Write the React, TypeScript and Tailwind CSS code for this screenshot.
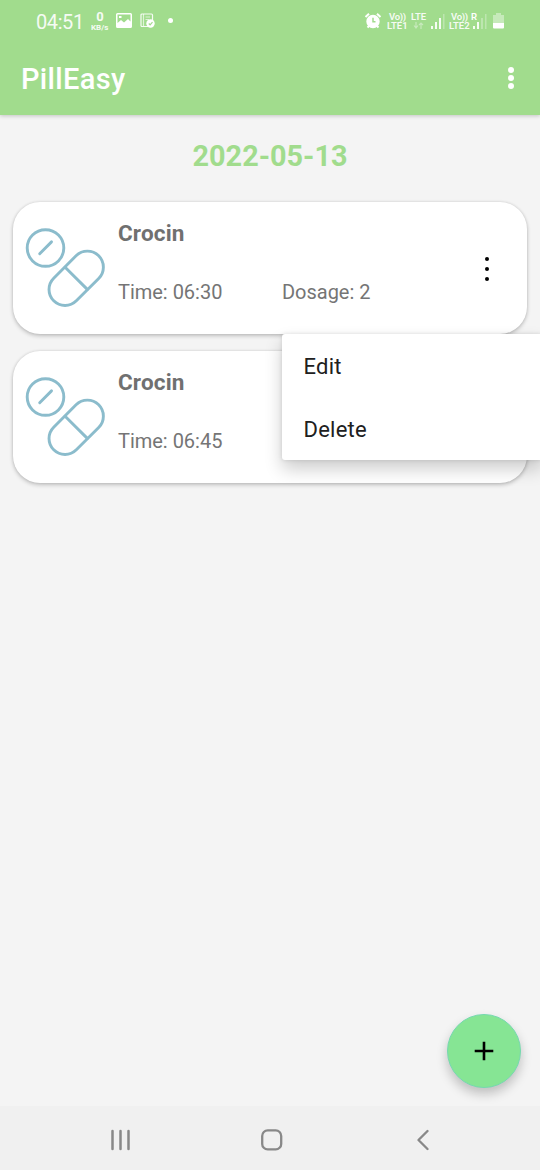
import React from "react";

function PillIcon() {
  return (
    <svg className="block h-[84px] w-[84px]" viewBox="24 226 84 84" fill="none" stroke="#8bbccc" strokeWidth="2.9" strokeLinecap="round">
      <circle cx="45.5" cy="248" r="18.3" />
      <path d="M39.7 253.7 51.5 241.9" />
      <rect x="44.4" y="262.3" width="63.6" height="32" rx="16" transform="rotate(-45 76.2 278.3)" />
      <path d="M65.1 267.2 87.3 289.4" />
    </svg>
  );
}

function MedicineCard({ name, time, dosage }: { name: string; time: string; dosage?: string }) {
  return (
    <article className="flex h-[131.5px] rounded-[27px] bg-white pl-[11px] pr-[38.5px] text-[#757575] shadow-[0_2px_4px_rgba(0,0,0,0.2),0_0_3px_rgba(0,0,0,0.12)]">
      <div className="w-[94px] shrink-0 pt-6">
        <PillIcon />
      </div>
      <div className="flex-1 pt-[17px]">
        <h2 className="text-[22.5px] leading-7 font-bold tracking-[0.15px] text-[#707070]">{name}</h2>
        <div className="mt-8 flex text-[20px] leading-[26px] tracking-[-0.02px]">
          <span className="w-[164px]">Time: {time}</span>
          {dosage && <span>Dosage: {dosage}</span>}
        </div>
      </div>
      <button className="flex flex-col items-center gap-[6px] self-start pt-[55px]" aria-label="Options">
        <i className="h-[4px] w-[4px] rounded-full bg-black" />
        <i className="h-[4px] w-[4px] rounded-full bg-black" />
        <i className="h-[4px] w-[4px] rounded-full bg-black" />
      </button>
    </article>
  );
}

function Signal({ level }: { level: number }) {
  return (
    <svg className="h-4 w-[14px]" viewBox="0 0 14 16" fill="white">
      <rect x="0" y="12" width="2" height="3" opacity=".9" />
      <rect x="4" y="8" width="2" height="7" opacity=".9" />
      <rect x="8" y="4" width="2" height="11" opacity={level > 2 ? 0.9 : 0.3} />
      <rect x="12" y="0" width="1.5" height="15" opacity=".3" />
    </svg>
  );
}

function StatusBar() {
  return (
    <div className="flex h-[43px] pl-9 text-white">
      <span className="w-[55px] pt-[10px] text-[20px] leading-6 tracking-[-0.4px] opacity-90">04:51</span>
      <span className="flex w-[25px] flex-col pt-[11px] opacity-90">
        <span className="w-[18px] text-center text-[13px] leading-[11px] font-bold">0</span>
        <span className="mt-[2px] w-[19px] text-[8px] leading-[8px] font-bold">KB/s</span>
      </span>
      <svg className="mt-[13px] h-4 w-4" viewBox="0 0 16 16" fill="white" fillRule="evenodd">
        <path d="M1.5 0h13Q16 0 16 1.5v12q0 1.500-1.500 1.500h-13Q0 15 0 13.500v-12Q0 0 1.500 0ZM1.500 1.500V10L5 7l3 2.500L12 6l2.500 2.500v-7ZM3 3h2.500v2H3Z" />
      </svg>
      <svg className="mt-[13px] ml-2 h-4 w-4" viewBox="0 0 16 16" fill="none" stroke="white" strokeWidth="1.2">
        <rect x="1" y="1" width="11.500" height="12.500" rx="1" opacity=".9" />
        <path d="M3.500 1v12M5.500 4H10M5.500 6.500H9" opacity=".65" />
        <circle cx="10.500" cy="10.500" r="4.200" fill="white" stroke="none" />
        <path d="m8.800 10.500 1.300 1.300 2.400-2.600" stroke="#a1dc8d" strokeWidth="1.200" />
      </svg>
      <i className="mt-[18px] ml-3 h-[5px] w-[5px] rounded-full bg-white" />
      <div className="ml-auto flex pr-[36px]">
        <svg className="mt-[12px] h-[18px] w-[18px]" viewBox="0 0 18 18" fill="none" stroke="white" strokeWidth="2">
          <circle cx="9" cy="9.500" r="5.700" fill="white" />
          <path d="M1.500 5 5 1.800M16.500 5 13 1.800M3.500 15.500l2-2M14.500 15.500l-2-2" />
          <path d="M9 5.800V9.800H11.500" stroke="#a1dc8d" strokeWidth="1.500" />
        </svg>
        <span className="ml-[5px] flex w-[24px] flex-col pt-[12px] text-[9.5px] leading-[9px] font-semibold whitespace-nowrap opacity-90">
          <span className="pl-[2px] tracking-[-0.3px]">Vo))</span>
          <span>LTE1</span>
        </span>
        <span className="flex w-[20px] flex-col pt-[12px] text-[9.5px] leading-[9px] font-semibold opacity-90">
          <span>LTE</span>
          <svg className="ml-[2px] mt-[1px] h-[7px] w-[11px]" viewBox="0 0 11 7" fill="none" stroke="white" strokeWidth="1.200" opacity=".45">
            <path d="M3 0v5M1 3.500l2 2.500 2-2.500M8 7V1M6 3l2-2 2 2" />
          </svg>
        </span>
        <div className="mt-[14px]"><Signal level={3} /></div>
        <span className="ml-[4px] flex w-[22px] flex-col pt-[12px] text-[9.5px] leading-[9px] font-semibold whitespace-nowrap opacity-90">
          <span className="pl-[2px] tracking-[-0.3px]">Vo))</span>
          <span>LTE2</span>
        </span>
        <span className="w-[2px] pt-[12px] text-[9.5px] leading-[9px] font-semibold">R</span>
        <div className="mt-[14px]"><Signal level={2} /></div>
        <svg className="mt-[13px] ml-[6px] h-4 w-[11px]" viewBox="0 0 11 16" fill="white">
          <path d="M3 0h5v2h3v8H0V2h3Z" opacity=".4" />
          <path d="M0 10h11v4.500q0 1-1 1H1q-1 0-1-1Z" />
        </svg>
      </div>
    </div>
  );
}

export default function App() {
  return (
    <div className="relative flex h-[1170px] w-[540px] flex-col overflow-hidden bg-[#f4f4f4] font-[Roboto,sans-serif]">
      <header className="h-[115px] shrink-0 bg-[#a1dc8d] shadow-[0_1px_4px_rgba(0,0,0,0.2)]">
        <StatusBar />
        <div className="flex h-[72px] items-center justify-between pr-[26px] pl-[21px]">
          <h1 className="text-[29px] leading-9 font-medium tracking-[0.35px] text-white">PillEasy</h1>
          <button className="flex flex-col gap-[2px] pb-[2px]" aria-label="Menu">
            <i className="h-[6px] w-[6px] rounded-full bg-white" />
            <i className="h-[6px] w-[6px] rounded-full bg-white" />
            <i className="h-[6px] w-[6px] rounded-full bg-white" />
          </button>
        </div>
      </header>
      <main className="relative flex-1 px-[13px] pt-[23px]">
        <p className="text-center text-[28.8px] leading-9 font-bold text-[#a1dc8d]">2022-05-13</p>
        <div className="mt-[28px] flex flex-col gap-[17.9px]">
          <MedicineCard name="Crocin" time="06:30" dosage="2" />
          <MedicineCard name="Crocin" time="06:45" />
        </div>
        <div className="absolute top-[219px] left-[282px] flex h-[126px] w-[260px] flex-col rounded-[3px] bg-white text-[22px] tracking-[0.25px] text-[#202020] shadow-[0_9px_18px_rgba(0,0,0,0.2),0_0_4px_rgba(0,0,0,0.12)]">
          <button className="h-[63px] pt-[2px] pl-[21.5px] text-left">Edit</button>
          <button className="h-[63px] pt-[2px] pl-[21.5px] text-left">Delete</button>
        </div>
        <button aria-label="Add medicine" className="absolute right-[19px] bottom-[18px] flex h-[74px] w-[74px] items-center justify-center rounded-full border border-[#75d9b0] bg-[#86e594] shadow-[0_6px_11px_rgba(0,0,0,0.22)]">
          <svg className="h-5 w-5" viewBox="0 0 20 20" fill="none" stroke="black" strokeWidth="2.600">
            <path d="M10 .7v18.600M.7 10h18.600" />
          </svg>
        </button>
      </main>
      <nav className="flex h-[64px] shrink-0 items-center justify-between bg-[#f0f0f0] pt-[3px] pr-[107px] pl-[110px]">
        <svg className="h-[22px] w-[22px]" viewBox="0 0 22 22" fill="none" stroke="#888" strokeWidth="2.500" strokeLinecap="round">
          <path d="M2.500 2v18M10.500 2v18M18.500 2v18" />
        </svg>
        <svg className="mr-[5px] h-[22px] w-[22px]" viewBox="0 0 22 22" fill="none" stroke="#888" strokeWidth="2.300">
          <rect x="1.200" y="1.400" width="19" height="19" rx="5.500" />
        </svg>
        <svg className="h-[22px] w-[16px]" viewBox="0 0 16 22" fill="none" stroke="#888" strokeWidth="2.300" strokeLinecap="round" strokeLinejoin="round">
          <path d="M10.500 2 1.500 11l9 9" />
        </svg>
      </nav>
    </div>
  );
}
